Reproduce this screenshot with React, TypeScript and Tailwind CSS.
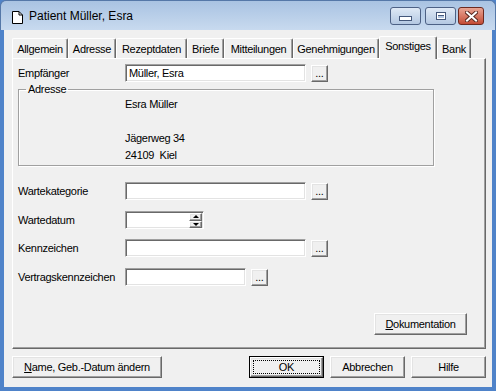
import type { ReactNode } from 'react'

const tabs = [
  { label: 'Allgemein', w: 'w-[56px]' },
  { label: 'Adresse', w: 'w-[48px]' },
  { label: 'Rezeptdaten', w: 'w-[71px]' },
  { label: 'Briefe', w: 'w-[37px]' },
  { label: 'Mitteilungen', w: 'w-[69px]' },
  { label: 'Genehmigungen', w: 'w-[86px]' },
  { label: 'Sonstiges', w: 'w-[58px]', active: true },
  { label: 'Bank', w: 'w-[34px]' },
]

const raised =
  'bg-[#f0f0f0] border border-t-white border-l-white border-r-[#696969] border-b-[#696969] shadow-[inset_-1px_-1px_0_#a0a0a0,inset_1px_1px_0_#e3e3e3]'
const sunken =
  'bg-white border border-t-[#a0a0a0] border-l-[#a0a0a0] border-r-white border-b-white shadow-[inset_1px_1px_0_#696969,inset_-1px_-1px_0_#e3e3e3]'

function Btn({ children, className = '' }: { children: ReactNode; className?: string }) {
  return <div className={`flex items-center justify-center ${raised} ${className}`}>{children}</div>
}

function Dots() {
  return (
    <div className={`ml-[5px] w-[17px] h-[17px] flex items-end justify-center pb-[2px] leading-none text-[11px] ${raised}`}>
      ...
    </div>
  )
}

function Row({ label, children, className = '' }: { label: string; children: ReactNode; className?: string }) {
  return (
    <div className={`flex items-center h-[18px] ${className}`}>
      <div className="w-[107px]">{label}</div>
      {children}
    </div>
  )
}

function WinBtn({ children, className = '' }: { children: ReactNode; className?: string }) {
  return (
    <div className={`h-[18px] flex items-center justify-center rounded-[3px] border border-[#4d6185] ${className}`}>
      {children}
    </div>
  )
}

export default function App() {
  return (
    <div className="w-[496px] h-[391px] flex flex-col bg-[#4f83c9] font-['Liberation_Sans',Arial,sans-serif] text-[11px] tracking-[-0.3px] text-black">
      {/* Title bar */}
      <div className="h-[30px] flex items-start bg-gradient-to-b from-[#a9c3e2] to-[#c8daef] pl-[11px] pr-[11px] border-t border-x border-[#5578a8] rounded-t-[6px]">
        <svg width="11" height="13" viewBox="0 0 11 13" className="mt-[10px]">
          <path d="M0.5 0.5H7L10.5 4V12.5H0.5Z" fill="#fff" stroke="#000" />
          <path d="M7 0.5V4H10.5" fill="none" stroke="#000" />
        </svg>
        <div className="ml-[6px] mt-[8px] text-[12px] leading-[14px] tracking-normal">Patient Müller, Esra</div>
        <div className="ml-auto mt-[6px] flex">
          <WinBtn className="w-[31px] bg-gradient-to-b from-[#dfe9f5] to-[#b4c8e2]">
            <div className="w-[13px] h-[5px] mt-[4px] bg-white border border-[#44577a]" />
          </WinBtn>
          <WinBtn className="ml-[4px] w-[31px] bg-gradient-to-b from-[#dfe9f5] to-[#b4c8e2]">
            <div className="w-[10px] h-[8px] border border-[#44577a] flex items-center justify-center bg-white">
              <div className="w-[6px] h-[3px] bg-[#b4c8e2] border-t border-[#44577a]" />
            </div>
          </WinBtn>
          <WinBtn className="ml-[2px] w-[26px] bg-gradient-to-b from-[#e8a493] to-[#c34a35] border-[#6d2a20]">
            <svg width="13" height="11" viewBox="0 0 13 11">
              <path d="M2 1.5L11 9.5M11 1.5L2 9.5" stroke="#5a2a22" strokeWidth="4" strokeLinecap="square" />
              <path d="M2 1.5L11 9.5M11 1.5L2 9.5" stroke="#fff" strokeWidth="2" strokeLinecap="square" />
            </svg>
          </WinBtn>
        </div>
      </div>

      {/* Client area */}
      <div className="flex-1 mx-[4px] mb-[4px] bg-[#f0f0f0] pl-[8px] pr-[6px] pt-[6px] flex flex-col">
        {/* Tabs */}
        <div className="flex items-end h-[22px]">
          {tabs.map(t =>
            t.active ? (
              <div
                key={t.label}
                className={`${t.w} h-[23px] -mb-[1px] relative z-10 bg-[#f0f0f0] rounded-t-[2px] border-t border-l border-r border-t-white border-l-white border-r-[#696969] shadow-[inset_-1px_0_0_#a0a0a0] text-center pt-[3px] leading-[13px]`}
              >
                {t.label}
              </div>
            ) : (
              <div
                key={t.label}
                className={`${t.w} h-[20px] rounded-t-[2px] border-t border-l border-r border-t-white border-l-white border-r-[#696969] shadow-[inset_-1px_0_0_#a0a0a0] text-center pt-[4px] leading-[13px]`}
              >
                {t.label}
              </div>
            )
          )}
        </div>

        {/* Panel */}
        <div className="h-[291px] border border-t-white border-l-white border-r-[#696969] border-b-[#696969] shadow-[inset_-1px_-1px_0_#a0a0a0] pl-[5px] pt-[5px] flex flex-col">
          <Row label="Empfänger">
            <div className={`w-[181px] h-[18px] ${sunken} pl-[3px] leading-[16px]`}>Müller, Esra</div>
            <Dots />
          </Row>

          <fieldset className="mt-[1px] w-[416px] border border-[#a0a0a0] shadow-[1px_1px_0_#fff,inset_1px_1px_0_#fff] pb-[1px]">
            <legend className="ml-[7px] px-[2px] leading-[13px]">Adresse</legend>
            <div className="pl-[106px] leading-[17px] whitespace-pre">
              <div>Esra Müller</div>
              <div>{' '}</div>
              <div>Jägerweg 34</div>
              <div>24109  Kiel</div>
            </div>
          </fieldset>

          <Row label="Wartekategorie" className="mt-[16px]">
            <div className={`w-[181px] h-[18px] ${sunken}`} />
            <Dots />
          </Row>

          <Row label="Wartedatum" className="mt-[11px]">
            <div className={`w-[79px] h-[18px] ${sunken} flex justify-end pr-[1px] pt-[1px]`}>
              <div className="flex flex-col w-[13px]">
                <div className={`h-[8px] flex items-center justify-center ${raised}`}>
                  <div className="w-0 h-0 border-x-[3px] border-x-transparent border-b-[3px] border-b-black" />
                </div>
                <div className={`h-[8px] flex items-center justify-center ${raised}`}>
                  <div className="w-0 h-0 border-x-[3px] border-x-transparent border-t-[3px] border-t-black" />
                </div>
              </div>
            </div>
          </Row>

          <Row label="Kennzeichen" className="mt-[10px]">
            <div className={`w-[181px] h-[18px] ${sunken}`} />
            <Dots />
          </Row>

          <Row label="Vertragskennzeichen" className="mt-[11px]">
            <div className={`w-[121px] h-[18px] ${sunken}`} />
            <Dots />
          </Row>

          <div className="mt-[27px] flex justify-end mr-[18px]">
            <Btn className="w-[93px] h-[22px]">
              <span>
                <span className="underline">D</span>okumentation
              </span>
            </Btn>
          </div>
        </div>

        {/* Bottom buttons */}
        <div className="mt-[7px] flex h-[22px]">
          <Btn className="w-[150px] h-[22px]">
            <span>
              <span className="underline">N</span>ame, Geb.-Datum ändern
            </span>
          </Btn>
          <div className="ml-auto flex gap-[6px]">
            <div className="w-[75px] h-[22px] border border-black flex">
              <div className={`flex-1 flex p-[2px] ${raised}`}>
                <div className="flex-1 border border-dotted border-black flex items-center justify-center">OK</div>
              </div>
            </div>
            <Btn className="w-[75px] h-[22px]">Abbrechen</Btn>
            <Btn className="w-[75px] h-[22px]">Hilfe</Btn>
          </div>
        </div>
      </div>
    </div>
  )
}
